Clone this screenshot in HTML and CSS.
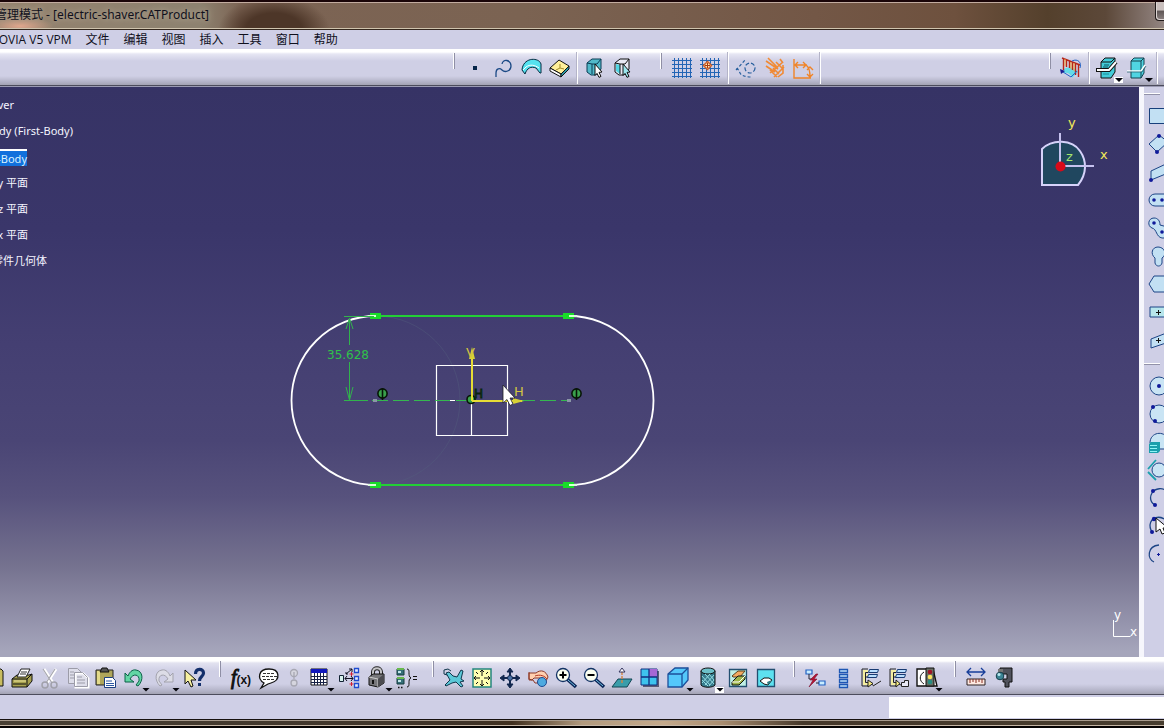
FILE: index.html
```html
<!DOCTYPE html>
<html lang="zh-CN">
<head>
<meta charset="utf-8">
<title>electric-shaver.CATProduct</title>
<link rel="stylesheet" href="styles.css">
</head>
<body>
<header class="titlebar">
  <h1 class="title">管理模式 - [electric-shaver.CATProduct]</h1>
  <button class="winbtn" type="button" aria-label="Minimize"></button>
</header>

<nav class="menubar">
  <button type="button">ENOVIA V5 VPM</button>
  <button type="button">文件</button>
  <button type="button">编辑</button>
  <button type="button">视图</button>
  <button type="button">插入</button>
  <button type="button">工具</button>
  <button type="button">窗口</button>
  <button type="button">帮助</button>
</nav>

<div class="toolbar top" role="toolbar" aria-label="Sketch tools">
  <div class="group first">
    <span class="grip"></span>
    <button class="tool" type="button" aria-label="Point"><svg viewBox="0 0 24 24"><path d="M10 10h4v4h-4z" fill="#06264a"/></svg></button>
    <button class="tool" type="button" aria-label="Spline"><svg viewBox="0 0 24 24" fill="none" stroke="#1c4a86" stroke-width="1.300"><path d="M5 21v-4c0-5 4-5 6-3 3 3 9 1 9-4 0-6-8-8-9-2"/></svg></button>
    <button class="tool" type="button" aria-label="Surface"><svg viewBox="0 0 24 24"><path d="M3 14C4 1 20 1 22 8v9h-1l-4-5C12 10 8 12 6 18z" fill="#55e2ef" stroke="#072b40"/><path d="M4 14l3-3c4-3 9-2 13 1" fill="none" stroke="#fff"/></svg></button>
    <button class="tool" type="button" aria-label="Volume"><svg viewBox="0 0 24 24"><path d="M3 12l9-8 10 6-8 8z" fill="#ffef9a" stroke="#111"/><path d="M3 12v3l11 6v-3z" fill="#fff" stroke="#111"/><path d="M14 18l8-8v3l-8 8z" fill="#2c98a5" stroke="#111"/><path d="M13 8v4l-4 2m4-2l4 1" stroke="#a28b28" fill="none"/></svg></button>
    <span class="sep"></span>
    <button class="tool" type="button" aria-label="Select solid"><svg viewBox="0 0 24 24"><path d="M4 7l5-4h9v10l-5 6H8l-4-3z" fill="#52b9c9" stroke="#0b3c55"/><path d="M4 7l5 1v10M9 8h5l4-5" fill="none" stroke="#0b3c55"/><path d="M12 8l7 8-3 .4 2 4-2 1-2-4-2 2z" fill="#fff" stroke="#111"/></svg></button>
    <button class="tool" type="button" aria-label="Select body"><svg viewBox="0 0 24 24"><path d="M4 7l5-4h9v10l-5 6H8l-4-3z" fill="#e7e9f4" stroke="#111"/><path d="M5 8l4 1v9l-4-3z" fill="#52d7e3"/><path d="M4 7l5 1v10M9 8h5l4-5" fill="none" stroke="#111"/><path d="M12 8l7 8-3 .4 2 4-2 1-2-4-2 2z" fill="#9ce7ee" stroke="#111"/></svg></button>
  </div>
  <div class="group">
    <span class="grip"></span>
    <button class="tool" type="button" aria-label="Grid"><svg viewBox="0 0 24 24" fill="none" stroke="#2365b5"><path d="M4.500 2v20M8.500 2v20M12.500 2v20M16.500 2v20M20.500 2v20M2 4.500h20M2 8.500h20M2 12.500h20M2 16.500h20M2 20.500h20"/></svg></button>
    <button class="tool" type="button" aria-label="Snap to point"><svg viewBox="0 0 24 24" fill="none" stroke="#2365b5"><path d="M4.500 2v20M8.500 2v20M12.500 2v20M16.500 2v20M20.500 2v20M2 4.500h20M2 8.500h20M2 12.500h20M2 16.500h20M2 20.500h20"/><path d="M9.500 5.500l4 4-4 4-4-4z" fill="#ffe9bd" stroke="#d2622a" stroke-width="1.500"/><path d="M9.500 7v5M7 9.500h5" stroke="#a63c10"/></svg></button>
    <span class="sep"></span>
    <button class="tool" type="button" aria-label="Construction element"><svg viewBox="0 0 24 24" fill="none" stroke="#245d9c" stroke-width="1.200"><circle cx="16" cy="12" r="5" stroke-dasharray="4 2"/><path d="M2 14L12 3" stroke-dasharray="3 2"/><path d="M2 13c3 0 3 2 4 4s4 4 12 4" stroke-dasharray="3 2"/></svg></button>
    <button class="tool" type="button" aria-label="Geometrical constraints"><svg viewBox="0 0 24 24" fill="none" stroke="#f08a35" stroke-width="1.600"><path d="M4 5l12 8M6 2l10 10M4 10l9 6M8 17l13-11M12 21L22 11M18 3l3 4M14 6l6 6M11 12l6 6M8 14l7 7M21 9v8l-5 4"/></svg></button>
    <button class="tool" type="button" aria-label="Dimensional constraints"><svg viewBox="0 0 24 24" fill="none" stroke="#f08428" stroke-width="1.400"><path d="M4 3v19h17M5 9h12M8 6L5 9l3 3M13 6l3 3-3 3M16 9c3 2 4 6 4 12M17 14l3-3 3 3M17 18l3 3 3-3"/></svg></button>
    <span class="sep"></span>
  </div>
  <div class="group last">
    <span class="grip"></span>
    <button class="tool" type="button" aria-label="Sketch analysis"><svg viewBox="0 0 24 24" fill="none"><path d="M5 13c5-3 12-1 14 3l-6 6c-1-4-4-6-9-5z" fill="#64dce9"/><path d="M4.500 2v12M7.500 4v7M10.500 5v7M13.500 6v8M16.500 7v12M19.500 8v13M3 2l18 7" stroke="#b6251b" stroke-width="1.400"/><path d="M6 3v7M12 6v7M15 7v8" stroke="#f2a63c"/><path d="M13 5c6-3 10 2 8 7M4 16l8 5 6-6" stroke="#2363c7"/><path d="M1 13l5 2-4 3z" fill="#1c1c90"/></svg></button>
    <span class="sep"></span>
    <button class="tool drop lit" type="button" aria-label="Cut part by sketch plane"><svg viewBox="0 0 24 24"><path d="M6 6l4-4h10v14l-4 6H6z" fill="#43ccd9" stroke="#111"/><path d="M6 6h10l4-4" fill="none" stroke="#111"/><path d="M1 14h13l7-8" fill="none" stroke="#111" stroke-width="4"/><path d="M2 14h12l7-8" fill="none" stroke="#fff" stroke-width="2"/><path d="M9 9h5M8 11h5" stroke="#0a5460"/><path d="M8 18h6" stroke="#1b8c98"/></svg></button>
    <button class="tool drop" type="button" aria-label="Visualization"><svg viewBox="0 0 24 24"><path d="M6 5l3-3h10v15l-3 5H6z" fill="#50d4e2" stroke="#12404f"/><path d="M6 5h10v17M16 5l3-3" fill="none" stroke="#12404f"/><path d="M2 15h14l4-6" fill="none" stroke="#fff" stroke-width="1.500"/><path d="M2 16h15l4-6" fill="none" stroke="#24616e" stroke-width=".8"/></svg></button>
    <span class="sep"></span>
  </div>
</div>

<main class="work">
  <section class="canvas" aria-label="Sketch">
    <ul class="tree">
      <li class="r1">electric-shaver</li>
      <li class="r2">First-Body (First-Body)</li>
      <li class="r3"><mark>First-Body</mark></li>
      <li class="r4">xy 平面</li>
      <li class="r5">yz 平面</li>
      <li class="r6">zx 平面</li>
      <li class="r7">零件几何体</li>
    </ul>
    <svg class="drawing" viewBox="0 87 1139 570" preserveAspectRatio="xMidYMin meet" fill="none">
      <path d="M376 316c46 0 84 38 84 84s-38 85-84 85" stroke="#53607f" stroke-width=".7" opacity=".55"/>
      <path d="M376 316a84.500 84.500 0 0 0 0 169M569 316a84.500 84.500 0 0 1 0 169" stroke="#fff" stroke-width="1.800"/>
      <path d="M376 316h192M376 485h192" stroke="#22cf35" stroke-width="2"/>
      <path d="M370 313h11v6h-11zM563 313h11v6h-11zM370 482h11v6h-11zM563 482h11v6h-11z" fill="#18dc28"/>
      <path d="M368 316h8M569 316h8M368 485h8M569 485h8" stroke="#d8ffd8" stroke-width="2"/>
      <path d="M436.500 365.500h71v70h-71zM471.500 401v34" stroke="#fff" stroke-width="1.200"/>
      <path d="M344 316.500h30M344 400.500h24M349.500 318v27M349.500 362v38M346 329l3.500-11 3.500 11M346 387l3.500 13 3.500-13" stroke="#31b44c"/>
      <path d="M372 400.500h196" stroke="#35b84f" stroke-dasharray="16 5"/>
      <path d="M450 400.500h5" stroke="#fff"/>
      <path d="M373 399h4v3h-4zM567 399h4v3h-4z" fill="#8b96a6"/>
      <text class="dim" x="327" y="359">35.628</text>
      <g fill="#3aa04c" stroke="#071507" stroke-width="1.600"><circle cx="382.500" cy="393.500" r="4.600"/><path d="M382.500 388v12"/><circle cx="576.500" cy="393.500" r="4.600"/><path d="M576.500 388v12"/><circle cx="471" cy="399.500" r="4"/></g>
      <text class="hmark" x="474" y="398">H</text>
      <path d="M472 401V353M472 401h50" stroke="#e6dc35" stroke-width="2"/>
      <path d="M469 359l3-12 3 12zM513 398l11 3-11 3z" fill="#d8d235"/>
      <text class="axis" x="466" y="357">V</text>
      <text class="axis" x="514" y="396">H</text>
      <path d="M503 385v18l4-3.500 3 6 3-1.500-3-6h5z" fill="#fff" stroke="#222" stroke-width=".8"/>
      <path d="M1042 185v-36c10-10 30-10 38 2 7 10 7 23-2 34z" fill="#20475f" stroke="#d6d2fa" stroke-width="2"/>
      <path d="M1060 133v33h34" stroke="#c6c2ef" stroke-width="2"/>
      <circle cx="1060.500" cy="166.500" r="5" fill="#d80a18"/>
      <text class="compass" x="1068" y="127">y</text>
      <text class="compass" x="1100" y="159">x</text>
      <text class="compass z" x="1066" y="161">z</text>
      <path d="M1113.500 620v16.500h17" stroke="#fff"/>
      <text class="corner" x="1114" y="619">y</text>
      <text class="corner" x="1130" y="636">x</text>
    </svg>
  </section>

  <aside class="side" role="toolbar" aria-label="Profile">
    <span class="hgrip"></span>
    <button class="tool" type="button" aria-label="Rectangle"><svg viewBox="0 0 24 24"><path d="M3.500 4.500h18v15h-18z" fill="#c2e0f3" stroke="#173f7b"/></svg></button>
    <button class="tool" type="button" aria-label="Oriented rectangle"><svg viewBox="0 0 24 24"><path d="M3 12l10-9 9 7-11 10z" fill="#c2e0f3" stroke="#1d4586"/><circle cx="13" cy="4" r="2" fill="#101a9a"/><circle cx="11" cy="20" r="2" fill="#101a9a"/></svg></button>
    <button class="tool" type="button" aria-label="Parallelogram"><svg viewBox="0 0 24 24"><path d="M5 20V11l17-8v10z" fill="#c2e0f3" stroke="#1d4586"/><circle cx="5" cy="20" r="2" fill="#101a9a"/></svg></button>
    <button class="tool" type="button" aria-label="Elongated hole"><svg viewBox="0 0 24 24"><rect x="3" y="6" width="24" height="12" rx="6" fill="#c2e0f3" stroke="#1d4586"/><circle cx="8" cy="12" r="1.800" fill="#101a9a"/><circle cx="16" cy="12" r="1.800" fill="#101a9a"/></svg></button>
    <button class="tool" type="button" aria-label="Cylindrical elongated hole"><svg viewBox="0 0 24 24"><path d="M8 2c-6 0-7 8-2 10 5 1 4 9 10 10h9V12l-11-3c0-4-2-7-6-7z" fill="#c2e0f3" stroke="#1d4586"/><circle cx="8" cy="7" r="1.800" fill="#101a9a"/><circle cx="16" cy="16" r="1.800" fill="#101a9a"/></svg></button>
    <button class="tool" type="button" aria-label="Keyhole profile"><svg viewBox="0 0 24 24"><path d="M9 14c-5-4-3-11 3-11s10 7 4 11v5c-1 4-6 4-7 0z" fill="#c2e0f3" stroke="#1d4586"/></svg></button>
    <button class="tool" type="button" aria-label="Hexagon"><svg viewBox="0 0 24 24"><path d="M3 12l5-8h12l5 8-5 8H8z" fill="#c2e0f3" stroke="#1d4586"/></svg></button>
    <button class="tool" type="button" aria-label="Centered rectangle"><svg viewBox="0 0 24 24"><path d="M4 7h20v10H4z" fill="#b7e6ec" stroke="#1d4586"/><path d="M12.500 10v5M10 12.500h5" stroke="#111"/></svg></button>
    <button class="tool" type="button" aria-label="Centered parallelogram"><svg viewBox="0 0 24 24"><path d="M5 20v-9l18-7v10z" fill="#c2e0f3" stroke="#1d4586"/><path d="M12.500 10v5M10 12.500h5" stroke="#111"/></svg></button>
    <span class="hgrip"></span>
    <button class="tool" type="button" aria-label="Circle"><svg viewBox="0 0 24 24"><circle cx="13" cy="12" r="9" fill="#c9e4f4" stroke="#1d4586"/><circle cx="13" cy="12" r="2" fill="#101a9a"/></svg></button>
    <button class="tool" type="button" aria-label="Three point circle"><svg viewBox="0 0 24 24"><circle cx="13" cy="12" r="9" fill="#c9e4f4" stroke="#1d4586"/><circle cx="7" cy="5" r="2" fill="#101a9a"/><circle cx="9" cy="19" r="2" fill="#101a9a"/></svg></button>
    <button class="tool" type="button" aria-label="Circle using coordinates"><svg viewBox="0 0 24 24"><path d="M4 13c0-11 14-13 18-4v10h-8" fill="#c9e4f4" stroke="#1d4586"/><path d="M3 14l2-2h9v9l-2 2H3z" fill="#1b9fac"/><path d="M4 15.500h7M4 18.500h7M4 21.500h7" stroke="#8ff4f5"/></svg></button>
    <button class="tool" type="button" aria-label="Tri-tangent circle"><svg viewBox="0 0 24 24" fill="none"><circle cx="13" cy="12" r="7" fill="#c9e4f4" stroke="#1d4586"/><path d="M10 2L2 11M2 14l8 8" stroke="#1aa0ae" stroke-width="1.800"/></svg></button>
    <button class="tool" type="button" aria-label="Three point arc"><svg viewBox="0 0 24 24" fill="none"><path d="M22 6C17 1 9 2 6 7s-1 11 4 12" stroke="#1d4586" stroke-width="1.300"/><circle cx="7" cy="5" r="2" fill="#101a9a"/><circle cx="9" cy="19" r="2" fill="#101a9a"/></svg></button>
    <button class="tool" type="button" aria-label="Arc with limits"><svg viewBox="0 0 24 24"><path d="M20 6C13 1 5 3 4 11c0 4 1 6 3 8" fill="none" stroke="#1d4586" stroke-width="1.300"/><circle cx="8" cy="5" r="2.200" fill="#101a9a"/><circle cx="6" cy="18" r="2" fill="#101a9a"/><path d="M10 4v14l4-3 2 5 3-1-2-5h5z" fill="#fff" stroke="#111"/></svg></button>
    <button class="tool" type="button" aria-label="Arc"><svg viewBox="0 0 24 24" fill="none"><path d="M13 3C1 4 1 17 8 20" stroke="#1d4586" stroke-width="1.300"/><path d="M12.500 11v3M11 12.500h3" stroke="#101a9a"/></svg></button>
  </aside>
</main>

<div class="toolbar bottom" role="toolbar" aria-label="Standard and view tools">
  <div class="group clipped">
    <button class="tool" type="button" aria-label="Open"><svg viewBox="0 0 24 24"><path d="M3 3h16l2 2v15H3z" fill="#c9bd60" stroke="#111"/></svg></button>
    <button class="tool" type="button" aria-label="Print"><svg viewBox="0 0 24 24"><path d="M2 13l5-4h12l3-1v7l-5 6H2z" fill="#a6a04f" stroke="#111"/><path d="M7 11l4-8h9l-4 8z" fill="#fff" stroke="#222"/><path d="M11 6h6M10 8h6" stroke="#333"/><path d="M2 13h15l5-5M17 13v8M3 18h13" fill="none" stroke="#111"/><path d="M4 15h12" stroke="#efe7a0"/></svg></button>
    <button class="tool" type="button" aria-label="Cut" disabled><svg viewBox="0 0 24 24" fill="none"><path d="M6 3l9 14M18 3L9 17" stroke="#fff" stroke-width="3"/><path d="M5 3l9 14M17 3L8 17" stroke="#a6a6ae" stroke-width="1.200"/><circle cx="7" cy="19" r="3" stroke="#a0a0aa" stroke-width="1.500"/><circle cx="16" cy="19" r="3" stroke="#a0a0aa" stroke-width="1.500"/></svg></button>
    <button class="tool" type="button" aria-label="Copy" disabled><svg viewBox="0 0 24 24"><path d="M2.500 2.500h9l4 4v11h-13z" fill="#dedeea" stroke="#9c9ca8"/><path d="M9.500 7.500h8l5 5v9h-13z" fill="#dedeea" stroke="#fff" stroke-width="2"/><path d="M8.500 6.500h8l5 5v9h-13zM11 11h5M11 14h8M11 17h8M4 6h4M4 9h4M4 12h4" fill="none" stroke="#9c9ca8"/></svg></button>
    <button class="tool" type="button" aria-label="Paste"><svg viewBox="0 0 24 24"><path d="M2 4h17v15H2z" fill="#afa65b" stroke="#222"/><path d="M3 5h3v13H3z" fill="#e2d98a"/><path d="M6 6l2-4h5l2 4z" fill="#555" stroke="#111"/><path d="M10.500 11.500h8l3 3v7h-11z" fill="#fff" stroke="#1c3f80"/><path d="M12 15h6M12 17.500h8M12 19.500h8" stroke="#2b57a2"/></svg></button>
    <button class="tool drop" type="button" aria-label="Undo"><svg viewBox="0 0 24 24"><path d="M3 7v9h9l-4-3c3-6 10-5 9 2l-3 4 2 1c6-6 5-15-2-16-4-1-7 3-8 6z" fill="#62d6a4" stroke="#0b6047"/></svg></button>
    <button class="tool drop" type="button" aria-label="Redo" disabled><svg viewBox="0 0 24 24"><path d="M21 7v9h-9l4-3c-3-6-10-5-9 2l3 4-2 1C2 14 3 5 10 4c4-1 7 3 8 6z" fill="#dcdce6" stroke="#a3a3ad"/></svg></button>
    <button class="tool" type="button" aria-label="What's this"><svg viewBox="0 0 24 24"><path d="M3 4v14l3-3 3 6 2-1-2-6h5z" fill="#f7f0a0" stroke="#111"/><path d="M13.500 8c0-6 8-6 8-1 0 4-4 3-4 8" fill="none" stroke="#132f6b" stroke-width="3.200"/><path d="M16 17h3v3h-3z" fill="#132f6b"/></svg></button>
  </div>
  <div class="group">
    <span class="grip"></span>
    <button class="tool fx" type="button" aria-label="Formula"><i>f</i><small>(x)</small></button>
    <button class="tool" type="button" aria-label="Comment"><svg viewBox="0 0 24 24"><path d="M7 17C0 13 1 3 12 3s12 11 2 14l-3 1-7 4z" fill="#fff" stroke="#111" stroke-width="1.300"/><path d="M6 7.500h11M5 10.500h15M6 13.500h12" stroke="#333" stroke-dasharray="3 1"/></svg></button>
    <button class="tool narrow" type="button" aria-label="Link" disabled><svg viewBox="0 0 24 24" fill="#d5d5de" stroke="#a7a7b2" stroke-width="1.300"><circle cx="12" cy="7" r="3.500"/><path d="M12 6v7"/><circle cx="12" cy="17" r="3"/></svg></button>
    <button class="tool drop" type="button" aria-label="Design table"><svg viewBox="0 0 24 24"><path d="M4 3h16v16H4z" fill="#fff" stroke="#111"/><path d="M4 3h16v4H4z" fill="#1018bd"/><path d="M7.500 7v12M10.500 7v12M13.500 7v12M16.500 7v12M4 10.500h16M4 13.500h16M4 16.500h16" stroke="#172145"/></svg></button>
    <button class="tool" type="button" aria-label="Relations"><svg viewBox="0 0 24 24" fill="none"><path d="M2.500 9.500h4v6h-4z" fill="#d7f2ed" stroke="#123"/><path d="M17.500 2.500h4v4h-4zM17.500 10.500h4v4h-4zM17.500 17.500h4v4h-4z" fill="#e5edff" stroke="#1d4bd0" stroke-width="1.300"/><path d="M9 8l6-5m-3 0h3v3M9 6v2h2M8 12.500h8M10 10l-2 2.500 2 2.500M14 10l2 2.500-2 2.500" stroke="#112"/><path d="M14.500 6v4M12.500 8h4M14.500 16v4M12.500 18h4" stroke="#d02034"/></svg></button>
    <button class="tool drop" type="button" aria-label="Lock"><svg viewBox="0 0 24 24"><path d="M8 11V6c0-5 8-5 8 0v5" fill="none" stroke="#222" stroke-width="4"/><path d="M8 11V6c0-5 8-5 8 0v5" fill="none" stroke="#c5c5c8" stroke-width="2"/><path d="M4 11l4-3h11v9l-6 4-9-2z" fill="#77777b" stroke="#111"/><path d="M4 11l9 2v8" fill="none" stroke="#ccc"/><path d="M13 13l6-5v9l-6 4z" fill="#4b4b50"/><path d="M8 14v4" stroke="#111" stroke-width="2"/></svg></button>
    <button class="tool" type="button" aria-label="Equivalent dimensions"><svg viewBox="0 0 24 24" fill="none"><path d="M2 3h7v6H2zM2 12h7v6H2z" fill="#356f79" stroke="#153d3c"/><path d="M2 3h7M2 12h7" stroke="#68b84e" stroke-width="2"/><path d="M3 6h3M3 15h3" stroke="#c2e5e8" stroke-width="2"/><path d="M12 3c4 0 0 7 4 9-4 1 0 9-4 9M18 10.500h4M18 13.500h4" stroke="#111"/><path d="M3 21.500h6" stroke="#111" stroke-width="1.500" stroke-dasharray="1.500 1.500"/></svg></button>
  </div>
  <div class="group">
    <span class="grip"></span>
    <button class="tool" type="button" aria-label="Fly mode"><svg viewBox="0 0 24 24"><path d="M4 7l3-1 4 4 4 1 4-7 2 1-2 8 3 2-4 1 3 4-2 1-5-5-4 1-6 3-1-1 5-5z" fill="#5cc8d8" stroke="#10364b"/><path d="M2 4l4-1 3 2M2 4v4l3 1" fill="none" stroke="#10364b"/></svg></button>
    <button class="tool" type="button" aria-label="Fit all in"><svg viewBox="0 0 24 24"><path d="M3 3h18v18H3z" fill="#ffffb0" stroke="#24867f" stroke-width="1.500"/><path d="M12 4v6M12 14v6M4 12h6M14 12h6M10 6l2-2 2 2M10 18l2 2 2-2M6 10l-2 2 2 2M18 10l2 2-2 2M6 6l2 2M18 6l-2 2M6 18l2-2M18 18l-2-2" stroke="#111" fill="none"/></svg></button>
    <button class="tool" type="button" aria-label="Pan"><svg viewBox="0 0 24 24" fill="#11274e" stroke="#11274e"><path d="M12 5v14M5 12h14" stroke-width="2"/><path d="M9 6l3-4 3 4zM9 18l3 4 3-4zM6 9l-4 3 4 3zM18 9l4 3-4 3z"/><circle cx="12" cy="12" r="2.500" fill="#4b73a7"/></svg></button>
    <button class="tool" type="button" aria-label="Rotate"><svg viewBox="0 0 24 24"><path d="M3 7h7c5-4 10-2 12 4l-2 4-6-3H8l-2 2-3-1z" fill="#ffd0b0" stroke="#8e3826"/><path d="M3 6v8h4l2 3h5" fill="none" stroke="#8e3826"/><circle cx="16" cy="16" r="4.500" fill="#4eaae0" stroke="#1d4b92"/><path d="M9 10c5-2 10 0 12 3" fill="none" stroke="#b33723"/></svg></button>
    <button class="tool" type="button" aria-label="Zoom in"><svg viewBox="0 0 24 24"><path d="M13 13l9 8" stroke="#0c2557" stroke-width="3.500"/><path d="M14 14l7 6" stroke="#6fc0e2"/><circle cx="9" cy="9" r="6.500" fill="#fbfff0" stroke="#123264" stroke-width="1.300"/><path d="M9 5.500v7M5.500 9h7" stroke="#000" stroke-width="2"/></svg></button>
    <button class="tool" type="button" aria-label="Zoom out"><svg viewBox="0 0 24 24"><path d="M13 13l9 8" stroke="#0c2557" stroke-width="3.500"/><path d="M14 14l7 6" stroke="#6fc0e2"/><circle cx="9" cy="9" r="6.500" fill="#fbfff0" stroke="#123264" stroke-width="1.300"/><path d="M5.500 9h7" stroke="#000" stroke-width="2"/></svg></button>
    <button class="tool" type="button" aria-label="Normal view"><svg viewBox="0 0 24 24"><path d="M2 21l6-8h14l-5 8z" fill="#3a9daa" stroke="#124553"/><path d="M12 6v12" stroke="#d58642" stroke-width="1.400" stroke-dasharray="3 1"/><path d="M9 6l3-4 3 4z" fill="#fff" stroke="#34345f"/></svg></button>
    <button class="tool" type="button" aria-label="Multi-view"><svg viewBox="0 0 24 24"><path d="M5 5h16v16H5z" fill="#5b5b75"/><path d="M3 3h16v16H3z" fill="#3ec3ed" stroke="#122e80"/><path d="M11 3h8v8h-8z" fill="#a667d5"/><path d="M11 3v16M3 11h16" stroke="#122e80" stroke-width="1.300"/></svg></button>
    <button class="tool drop" type="button" aria-label="Isometric view"><svg viewBox="0 0 24 24"><path d="M2 8l7-6h13v12l-6 7H2z" fill="#54c8fb" stroke="#1c4f9a" stroke-width="1.300"/><path d="M2 8h14v13M16 8l6-6" fill="none" stroke="#1c4f9a" stroke-width="1.300"/></svg></button>
    <button class="tool drop lit" type="button" aria-label="Shading"><svg viewBox="0 0 24 24"><path d="M5 5v14c2 3 12 3 14 0V5z" fill="#377c8e" stroke="#111"/><ellipse cx="12" cy="5" rx="7" ry="3" fill="#6cc0c9" stroke="#111"/><path d="M6 10l8 9M6 14l6 6M9 8l9 10M13 8l5 6M18 9l-9 10M14 8l-8 9M18 14l-5 6" stroke="#94dce2"/></svg></button>
    <button class="tool" type="button" aria-label="Hide or show"><svg viewBox="0 0 24 24"><path d="M3.500 3.500h17v17h-17z" fill="#bff0e5" stroke="#234f70" stroke-width="1.300"/><path d="M6 10l6-5h7l-5 6H7z" fill="#f5a961" stroke="#5a4520"/><path d="M6 16l6-6h7v3l-6 6H6z" fill="#9fb54b" stroke="#111"/><path d="M6 16h7l6-6" fill="none" stroke="#fff"/></svg></button>
    <button class="tool" type="button" aria-label="Swap visible space"><svg viewBox="0 0 24 24"><path d="M3.500 3.500h17v17h-17z" fill="#5de1f0" stroke="#234f70" stroke-width="1.300"/><path d="M6 15l4-3h5l3 2-4 5-4-1z" fill="#fff" stroke="#111"/><path d="M13 16l5-2-4 5z" fill="#2b777f"/></svg></button>
  </div>
  <div class="group wide">
    <span class="grip"></span>
    <button class="tool" type="button" aria-label="Cut update"><svg viewBox="0 0 24 24" fill="none"><path d="M3 4h6v4H3zM16 15h6v4h-6z" fill="#c9edff" stroke="#2262c3" stroke-width="1.200"/><path d="M6 8v5h3M13 17h3" stroke="#223"/><path d="M13 8l-6 6h3l-4 7 8-8h-3l4-5z" fill="#b31332" stroke="#7d1030" stroke-width=".6"/></svg></button>
    <button class="tool" type="button" aria-label="Stack"><svg viewBox="0 0 24 24"><path d="M8.500 3.500h8v3h-8zM8.500 8.500h8v3h-8zM8.500 13.500h8v3h-8zM8.500 18.500h8v3h-8z" fill="#bbdcf7" stroke="#1e57b4" stroke-width="1.300"/></svg></button>
    <button class="tool" type="button" aria-label="Structure scan"><svg viewBox="0 0 24 24" fill="none"><path d="M9 3H3v17h6v-3l5 2M4 11h5" stroke="#222"/><path d="M9 5H5v13h6M5 9h4" stroke="#f4eea0" stroke-width="2"/><path d="M9 6.500H6.500v10H9" stroke="#222"/><path d="M10.500 3.500h9l-1 3h-9zM9.500 8.500h9l-1 3h-9z" fill="#b9dfff" stroke="#173a72"/><path d="M9 14l5 3.500L9 21z" fill="#f6eb82" stroke="#222"/><path d="M14 20l8-5" stroke="#222"/></svg></button>
    <button class="tool" type="button" aria-label="Define in work object"><svg viewBox="0 0 24 24" fill="none"><path d="M9 3H3v17h6v-3l5 2M4 11h5" stroke="#222"/><path d="M9 5H5v13h6M5 9h4" stroke="#f4eea0" stroke-width="2"/><path d="M9 6.500H6.500v10H9" stroke="#222"/><path d="M10.500 3.500h9l-1 3h-9zM9.500 8.500h9l-1 3h-9z" fill="#b9dfff" stroke="#173a72"/><path d="M9 14l4 3.500L9 21z" fill="#f6eb82" stroke="#222"/><path d="M14.500 20.500v-4h3v-2h4v6z" fill="#e8e8f5" stroke="#222"/></svg></button>
    <button class="tool drop" type="button" aria-label="Update status"><svg viewBox="0 0 24 24"><path d="M2 3h16l4 17H2z" fill="#fff" stroke="#111" stroke-width="1.400"/><path d="M9 6c-5 3-5 9 0 12" fill="none" stroke="#111"/><path d="M11 2h8v18h-8z" fill="#687064" stroke="#111"/><circle cx="15" cy="6" r="2.300" fill="#9f1426"/><circle cx="15" cy="11" r="2.300" fill="#fbe45d"/><circle cx="15" cy="16" r="2.300" fill="#278e83"/></svg></button>
  </div>
  <div class="group">
    <span class="grip"></span>
    <button class="tool" type="button" aria-label="Measure between"><svg viewBox="0 0 24 24" fill="none"><path d="M3 6h18M7 2L3 6l4 4M17 2l4 4-4 4" stroke="#173e99" stroke-width="1.300"/><path d="M3 13h18v6H3z" fill="#ffe9e1" stroke="#2d2020"/><path d="M6 13v4M9 13v3M12 13v4M15 13v3M18 13v4" stroke="#862c20"/></svg></button>
    <button class="tool" type="button" aria-label="Measure inertia"><svg viewBox="0 0 24 24"><path d="M8 2h12v14h-3v5h-4v-5h-2v-3h4V8H8z" fill="#50525c" stroke="#111"/><path d="M6 3h5v3H6z" fill="#777"/><circle cx="8" cy="10" r="3.800" fill="#3c8494" stroke="#163f4c"/><circle cx="7" cy="8.500" r="1.500" fill="#b9eaf0"/></svg></button>
  </div>
</div>

<footer class="status">
  <input class="command" type="text" aria-label="Command">
</footer>
<div class="frame"></div>
</body>
</html>
```
FILE: styles.css
```css
* { box-sizing: border-box; }

body {
  margin: 0;
  height: 100vh;
  display: flex;
  flex-direction: column;
  overflow: hidden;
  background: #000;
  font-family: "Open Sans", "Noto Sans CJK SC", sans-serif;
  font-size: 12px;
  color: #10101c;
}

button {
  padding: 0;
  border: 0;
  background: none;
  font: inherit;
  color: inherit;
}

/* Window caption */
.titlebar {
  flex: none;
  height: 30px;
  display: flex;
  align-items: flex-start;
  justify-content: space-between;
  border-top: 2px solid #1a0508;
  border-bottom: 1px solid #33271d;
  box-shadow: inset 0 1px #c3aca0, inset 0 -1px #d0c4ae;
  background:
    radial-gradient(ellipse 34px 9px at 20px 24px, #e0a78e, transparent),
    radial-gradient(ellipse 56px 34px at 274px 28px, #4d3628 50%, transparent),
    linear-gradient(90deg, #93826e 0, #8d8270 200px, #7c6454 240px, #7b6352 45%, #735746 70%, #6e513e 82%, #54402c 90%, #5c4839 95%, #938582 100%);
}
.title {
  margin: 3px 0 0 -5px;
  font-family: "Noto Sans", "Noto Sans CJK SC", sans-serif;
  font-size: 12px;
  line-height: 20px;
  font-weight: 400;
  white-space: nowrap;
  text-shadow: 0 0 6px #c4b7a4;
}
.winbtn {
  width: 9px;
  height: 19px;
  border: 1px solid #201a1a;
  border-width: 0 0 1px 1px;
  border-radius: 0 0 0 4px;
  box-shadow: inset 1px -1px #ddd5d3;
  background: linear-gradient(#c9bfbd 0 45%, #5f5656 50%, #8b8180);
}

/* Menus */
.menubar {
  flex: none;
  height: 19px;
  display: flex;
  gap: 14px;
  background: #cfcfe6;
}
.menubar button {
  flex: none;
  line-height: 19px;
  white-space: nowrap;
}
.menubar button:first-child { margin-left: -17px; }

/* Tool strips */
.toolbar {
  flex: none;
  height: 38px;
  display: flex;
  align-items: stretch;
  overflow: hidden;
  background: linear-gradient(#fff 0 3px, #e6e6f3 5px, #cfcfe5 12px, #cfcfe5 27px, #b2b2c6 33px, #a3a3b3 36px, #4c4c5c 36px 37px, #9a9ab2 37px);
}
.toolbar.bottom {
  background: linear-gradient(#fff 0 4px, #e2e2f0 6px, #cfcfe5 14px, #cfcfe5 27px, #b2b2c6 34px, #a3a3b3 37px, #4c4c5c 37px);
}
.group {
  flex: none;
  display: flex;
  align-items: center;
}
.bottom .group { padding-top: 3px; }
.bottom .group.wide { padding-left: 2px; }
.top .group.first { margin: 0 23px 0 453px; }
.top .group.last { margin-left: auto; padding-right: 3px; }
.group.clipped { margin-left: -20px; }

.grip {
  align-self: flex-start;
  width: 2px;
  height: 16px;
  margin: 4px 6px 0 0;
  border-left: 1px solid #fff;
  border-right: 1px solid #8f8fa5;
}
.bottom .grip { margin: 1px 6px 0 11px; }
.sep {
  width: 2px;
  height: 32px;
  margin: 0 3px;
  border-left: 1px solid #b4b4c8;
  border-right: 1px solid #fff;
}
.tool {
  flex: none;
  position: relative;
  width: 28px;
  height: 28px;
  display: flex;
  align-items: center;
  justify-content: center;
}
.tool svg {
  flex: none;
  display: block;
  width: 24px;
  height: 24px;
}
.tool.narrow { width: 22px; }
.tool.drop {
  width: 30px;
  justify-content: flex-start;
  padding-left: 2px;
}
.tool.drop::after {
  content: "";
  position: absolute;
  right: 0;
  bottom: 0;
  width: 8px;
  height: 4px;
  background: #05050c;
  clip-path: polygon(0 0, 100% 0, 50% 100%);
}
.tool.lit::before {
  content: "";
  position: absolute;
  right: 0;
  bottom: -1px;
  width: 9px;
  height: 6px;
  background: #fff;
}
.fx {
  align-items: baseline;
  color: #111;
}
.fx i {
  font-family: "Liberation Serif", serif;
  font-size: 20px;
  line-height: 26px;
  -webkit-text-stroke: 1px #111;
}
.fx small {
  font-family: "Liberation Sans", sans-serif;
  font-size: 12px;
  font-weight: 700;
}

/* Work area */
.work {
  flex: 1;
  min-height: 0;
  display: flex;
}
.canvas {
  flex: 1;
  min-width: 0;
  position: relative;
  overflow: hidden;
  background: linear-gradient(#363365 0, #3a366a 25%, #443f72 45%, #4a4575 62%, #57527d 72%, #75728f 84%, #a5a5bb 99%, #a5a5bb 100%);
}
.drawing {
  position: absolute;
  inset: 0;
  width: 100%;
  height: 100%;
}
.tree {
  margin: 0;
  padding: 5px 0 0;
  list-style: none;
  font-family: "Noto Sans", "Noto Sans CJK SC", sans-serif;
  font-size: 11px;
  line-height: 26px;
  color: #f4f4ff;
  white-space: nowrap;
}
/* The tree is scrolled left, so each label ends at its own column. */
.tree li {
  display: flex;
  justify-content: flex-end;
  height: 26px;
}
.r1 { width: 14px; }
.r2 { width: 73px; }
.r3 { width: 27px; }
.r4, .r5, .r6 { width: 28px; }
.r7 { width: 47px; }
.tree mark {
  align-self: center;
  border-top: 2px solid #fff;
  background: #1170dc;
  color: #d9f1ff;
  line-height: 15px;
}
.hmark, .axis, .compass, .corner { font-family: "DejaVu Sans", sans-serif; }
.dim {
  font-family: "DejaVu Sans", sans-serif;
  font-size: 12px;
  fill: #2fc24b;
}
.hmark {
  font-size: 12px;
  fill: #37a558;
  stroke: #0a210e;
  stroke-width: 1px;
}
.axis { font-size: 13px; fill: #d3c440; }
.compass { font-size: 13px; fill: #f2ea58; }
.compass.z { fill: #a4e66c; }
.corner { font-size: 12px; fill: #fff; }

.side {
  flex: none;
  width: 25px;
  overflow: hidden;
  border-left: 5px solid #f6f6fc;
  background: #cfcfe6;
}
.hgrip {
  display: block;
  width: 16px;
  height: 2px;
  margin: 9px 0 7px;
  border-top: 1px solid #fff;
  border-bottom: 1px solid #9191a8;
}
.hgrip:first-child { margin-top: 6px; }

/* Status line */
.status {
  flex: none;
  height: 24px;
  display: flex;
  justify-content: flex-end;
  padding-top: 2px;
  background: #cfcfe6;
}
.command {
  width: 275px;
  height: 21px;
  padding: 0 4px;
  border: 0;
  background: #fff;
  font: inherit;
}
.frame {
  flex: none;
  height: 9px;
  border-top: 1px solid #17110e;
  border-bottom: 2px solid #050202;
  box-shadow: inset 0 1px #a99c8e, inset 0 -1px #c5b5a4;
  background: linear-gradient(90deg, #494034 0, #3f3328 40%, #41301f 44%, #b29a7e 50%, #c4a98b 57%, #a98d70 62%, #46382a 69%, #473d2f 100%);
}
```
